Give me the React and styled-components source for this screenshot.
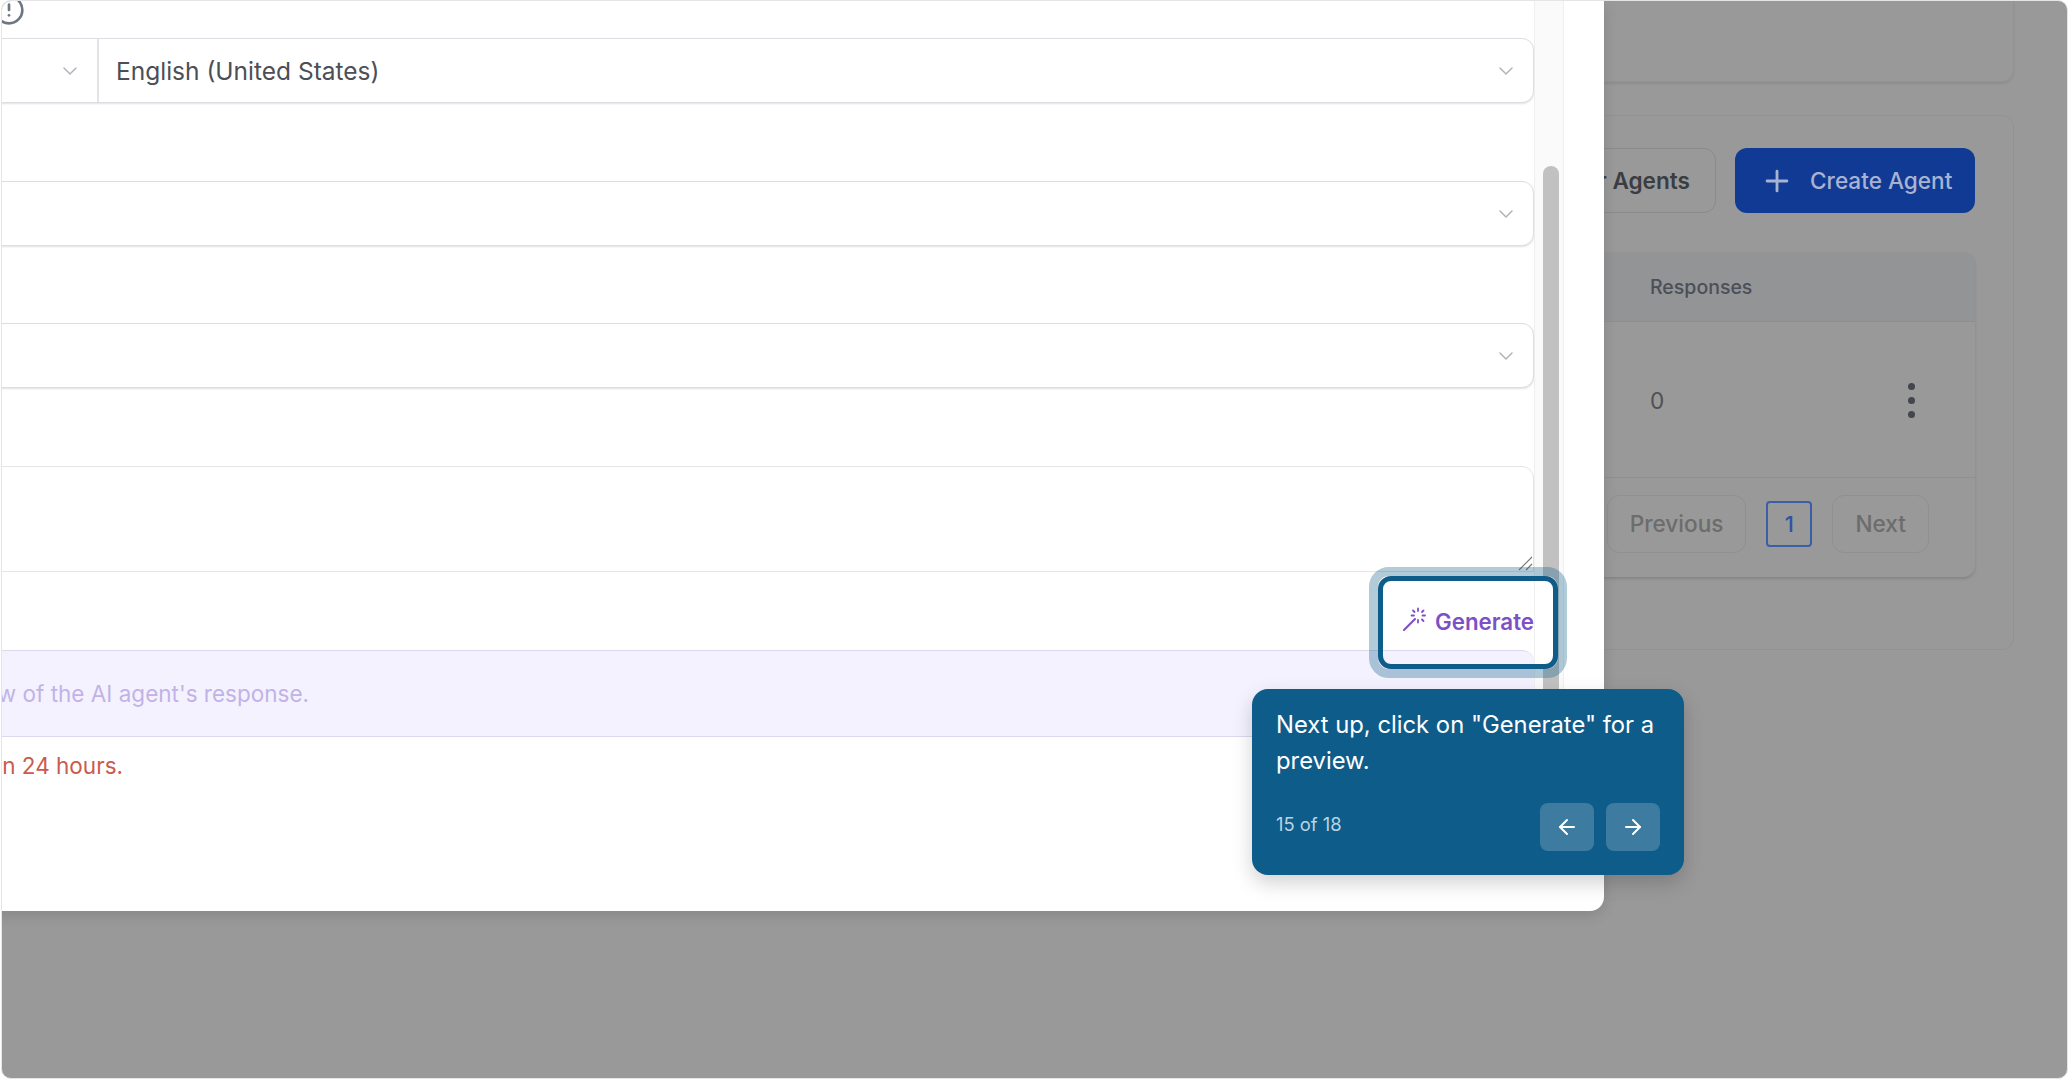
import React from "react";
import styled, { createGlobalStyle } from "styled-components";
import { ArrowLeft, ArrowRight, ChevronDown, CircleAlert, Plus } from "lucide-react";

const Global = createGlobalStyle`
  html, body { margin: 0; padding: 0; background: #fff; overflow: hidden; }
  body { font-family: Inter, "Liberation Sans", sans-serif; }
  * { box-sizing: border-box; }
`;

const Frame = styled.div`
  position: relative;
  width: 2067px;
  height: 1079px;
  margin: 0 0 0 1px;
  border: 1px solid #e3e5e9;
  border-radius: 10px;
  overflow: hidden;
  background: #999999;
`;

const Backdrop = styled.div`
  display: flex;
  flex-direction: column;
  align-items: flex-end;
  gap: 33px;
  padding-right: 53px;
`;

const TopCard = styled.div`
  width: 800px;
  height: 81px;
  border: 1px solid #929292;
  border-top: 0;
  border-radius: 0 0 12px 12px;
  box-shadow: 0 2px 2px #8f8f8f;
`;

const AgentsCard = styled.div`
  width: 800px;
  height: 535px;
  padding: 32px 38px 0 0;
  border: 1px solid #929292;
  border-radius: 12px;
  display: flex;
  flex-direction: column;
  align-items: flex-end;
  gap: 39px;
`;

const Actions = styled.div`
  display: flex;
  gap: 19px;
`;

const OutlineButton = styled.div`
  width: 220px;
  height: 65px;
  padding-right: 25px;
  border: 1px solid #8a8a8a;
  border-radius: 12px;
  display: flex;
  align-items: center;
  justify-content: flex-end;
  color: #3b3d42;
  font-size: 22.6px;
  font-weight: 600;
  white-space: nowrap;
`;

const PrimaryButton = styled.div`
  width: 240px;
  height: 65px;
  padding-left: 25px;
  border-radius: 12px;
  background: #113a95;
  color: #a8b4cf;
  display: flex;
  align-items: center;
  gap: 16px;
  font-size: 22.6px;
  font-weight: 500;
  white-space: nowrap;
`;

const TableCard = styled.div`
  width: 760px;
  height: 325px;
  border-radius: 12px;
  background: #999999;
  box-shadow: 0 2px 3px #858585;
  display: flex;
  flex-direction: column;
`;

const TableHead = styled.div`
  height: 70px;
  padding-left: 435px;
  background: #939496;
  border-radius: 12px 12px 0 0;
  border-bottom: 1px solid #8e8e8e;
  display: flex;
  align-items: center;
  color: #4b4f57;
  font-size: 19.5px;
  font-weight: 500;
`;

const TableRow = styled.div`
  height: 156px;
  padding: 1px 60px 0 435px;
  border-bottom: 1px solid #8f8f8f;
  display: flex;
  align-items: center;
  justify-content: space-between;
  color: #4e5156;
  font-size: 22.6px;
`;

const Dots = styled.span`
  display: flex;
  flex-direction: column;
  gap: 7px;
`;

const Dot = styled.i`
  display: block;
  width: 7px;
  height: 7px;
  border-radius: 50%;
  background: #43454f;
`;

const Pager = styled.div`
  flex: 1;
  display: flex;
  align-items: center;
  justify-content: flex-end;
  gap: 20px;
  padding: 0 46px 8px 0;
`;

const PageButton = styled.div`
  height: 58px;
  padding: 0 22px;
  border: 1px solid #909090;
  border-radius: 12px;
  display: flex;
  align-items: center;
  color: #6c6c6c;
  font-size: 22.6px;
  font-weight: 500;
`;

const PageCurrent = styled.div`
  width: 46px;
  height: 46px;
  border: 2px solid #3c5ea6;
  border-radius: 4px;
  display: flex;
  align-items: center;
  justify-content: center;
  color: #2f53a0;
  font-size: 22px;
  font-weight: 500;
`;

const Modal = styled.div`
  position: absolute;
  left: -800px;
  top: 0;
  width: 2402px;
  height: 910px;
  background: #fff;
  border-radius: 0 0 14px 0;
  box-shadow: 0 4px 14px rgba(0, 0, 0, 0.12);
  display: flex;
  overflow: hidden;
`;

const FormColumn = styled.div`
  width: 2332px;
  display: flex;
  flex-direction: column;
`;

const AlertRow = styled.div`
  height: 37px;
  padding: 0 0 12px 791px;
  overflow: hidden;
  color: #6f7683;
  display: flex;
  align-items: flex-end;
`;

const Field = styled.div`
  height: ${(p) => p.$h}px;
  margin-bottom: ${(p) => p.$gap}px;
  background: #fff;
  border: 1px solid #dcdee3;
  border-radius: 0 12px 12px 0;
  box-shadow: 0 1px 2px rgba(0, 0, 0, 0.12);
  display: flex;
  color: #b0b4ba;
`;

const PrefixSelect = styled.div`
  width: 896px;
  border-right: 2px solid #e2e3e7;
  padding-right: 15px;
  display: flex;
  align-items: center;
  justify-content: flex-end;
`;

const SelectBody = styled.div`
  flex: 1;
  padding: 0 15px 0 17px;
  display: flex;
  align-items: center;
  justify-content: flex-end;
`;

const SelectValue = styled.span`
  flex: 1;
  color: #4c4f55;
  font-size: 24.5px;
  white-space: nowrap;
`;

const TextareaField = styled.div`
  position: relative;
  height: 106px;
  border: 1px solid #e4e5e9;
  border-radius: 0 12px 0 0;
  background: #fff;
`;

const ResizeHandle = styled.svg`
  position: absolute;
  right: 0;
  bottom: 0;
`;

const GenerateRow = styled.div`
  height: 78px;
  padding: 20px 0 0 0;
  display: flex;
  justify-content: flex-end;
  align-items: center;
`;

const GenerateLabel = styled.div`
  display: flex;
  align-items: center;
  gap: 7px;
  color: #7d50c6;
  font-size: 22.3px;
  font-weight: 600;
`;

const WandIcon = styled.svg`
  margin-top: -5px;
`;

const Band = styled.div`
  height: 87px;
  background: #f4f2fe;
  border-top: 1px solid #dcd9ee;
  border-bottom: 1px solid #dcd9ee;
  border-top-right-radius: 12px;
  display: flex;
  align-items: center;
`;

const BandText = styled.div`
  width: 1107px;
  text-align: right;
  white-space: nowrap;
  color: #c2b2e8;
  font-size: 22.5px;
`;

const Warning = styled.div`
  width: 921px;
  margin-top: 15px;
  text-align: right;
  white-space: nowrap;
  color: #cb5a4f;
  font-size: 22.5px;
  line-height: 27px;
`;

const ScrollTrack = styled.div`
  width: 30px;
  height: 760px;
  padding: 165px 9px 20px 9px;
  background: #fafafa;
  border-left: 1px solid #efefef;
  border-right: 1px solid #efefef;
`;

const ScrollThumb = styled.div`
  width: 16px;
  height: 100%;
  margin-left: -1px;
  background: #c1c1c1;
  border-radius: 8px;
`;

const Highlight = styled.div`
  position: absolute;
  left: 1367px;
  top: 566px;
  width: 198px;
  height: 111px;
  border-radius: 20px;
  border: 9px solid rgba(14, 92, 138, 0.32);
  pointer-events: none;
`;

const HighlightInner = styled.div`
  width: 100%;
  height: 100%;
  border: 5px solid #0e5c8a;
  border-radius: 13px;
  background: linear-gradient(to right, transparent 152px, #fff 152px);
`;

const Tooltip = styled.div`
  position: absolute;
  left: 1250px;
  top: 688px;
  width: 432px;
  height: 186px;
  padding: 18px 20px 0 24px;
  background: #0e5c8a;
  border-radius: 16px;
  box-shadow: 0 8px 20px rgba(0, 0, 0, 0.18);
  color: #fff;
  &::before {
    content: "";
    position: absolute;
    left: 208px;
    top: -8px;
    width: 16px;
    height: 16px;
    background: #0e5c8a;
    transform: rotate(45deg);
    z-index: -1;
  }
`;

const TooltipText = styled.div`
  font-size: 23.8px;
  line-height: 36px;
`;

const TooltipFoot = styled.div`
  margin-top: 24px;
  padding-right: 4px;
  display: flex;
  align-items: center;
  justify-content: space-between;
`;

const Counter = styled.span`
  margin-top: -7px;
  font-size: 18.4px;
  color: #bcd3e1;
`;

const NavGroup = styled.div`
  display: flex;
  gap: 12px;
`;

const NavButton = styled.div`
  width: 54px;
  height: 48px;
  border-radius: 8px;
  background: #3d7ba1;
  display: flex;
  align-items: center;
  justify-content: center;
  color: #fff;
`;

const Wand = () => (
  <WandIcon width="26" height="26" viewBox="0 0 26 26" fill="none" stroke="currentColor" strokeWidth="1.8" strokeLinecap="round">
    <path d="M2 24 13 13" strokeWidth="2.1" />
    <path d="M16 2.5v2.5M16 14v2.500M9.500 9.500h2.500M20.500 9.500h2.500M11 4.500l1.500 1.500M21.500 4.500l-1.500 1.500M21.500 15l-1.500-1.500" />
  </WandIcon>
);

export default function App() {
  return (
    <>
      <Global />
      <Frame>
        <Backdrop>
          <TopCard />
          <AgentsCard>
            <Actions>
              <OutlineButton>Filter Agents</OutlineButton>
              <PrimaryButton>
                <Plus size={34} strokeWidth={2} />
                Create Agent
              </PrimaryButton>
            </Actions>
            <TableCard>
              <TableHead>Responses</TableHead>
              <TableRow>
                0
                <Dots>
                  <Dot />
                  <Dot />
                  <Dot />
                </Dots>
              </TableRow>
              <Pager>
                <PageButton>Previous</PageButton>
                <PageCurrent>1</PageCurrent>
                <PageButton>Next</PageButton>
              </Pager>
            </TableCard>
          </AgentsCard>
        </Backdrop>
        <Modal>
          <FormColumn>
            <AlertRow>
              <CircleAlert size={32} strokeWidth={2} />
            </AlertRow>
            <Field $h={65} $gap={78}>
              <PrefixSelect>
                <ChevronDown size={24} strokeWidth={1.5} />
              </PrefixSelect>
              <SelectBody>
                <SelectValue>English (United States)</SelectValue>
                <ChevronDown size={24} strokeWidth={1.5} />
              </SelectBody>
            </Field>
            <Field $h={65} $gap={77}>
              <SelectBody>
                <ChevronDown size={24} strokeWidth={1.5} />
              </SelectBody>
            </Field>
            <Field $h={65} $gap={78}>
              <SelectBody>
                <ChevronDown size={24} strokeWidth={1.5} />
              </SelectBody>
            </Field>
            <TextareaField>
              <ResizeHandle width="16" height="16" viewBox="0 0 16 16" fill="none" stroke="#777" strokeWidth="1.2">
                <path d="M2 15 15 2M9 15l6-6" />
              </ResizeHandle>
            </TextareaField>
            <GenerateRow>
              <GenerateLabel>
                <Wand />
                Generate
              </GenerateLabel>
            </GenerateRow>
            <Band>
              <BandText>Generate a preview of the AI agent's response.</BandText>
            </Band>
            <Warning>Previews may take up to a few minutes and expire in 24 hours.</Warning>
          </FormColumn>
          <ScrollTrack>
            <ScrollThumb />
          </ScrollTrack>
        </Modal>
        <Highlight>
          <HighlightInner />
        </Highlight>
        <Tooltip>
          <TooltipText>Next up, click on "Generate" for a preview.</TooltipText>
          <TooltipFoot>
            <Counter>15 of 18</Counter>
            <NavGroup>
              <NavButton>
                <ArrowLeft size={24} strokeWidth={2} />
              </NavButton>
              <NavButton>
                <ArrowRight size={24} strokeWidth={2} />
              </NavButton>
            </NavGroup>
          </TooltipFoot>
        </Tooltip>
      </Frame>
    </>
  );
}
